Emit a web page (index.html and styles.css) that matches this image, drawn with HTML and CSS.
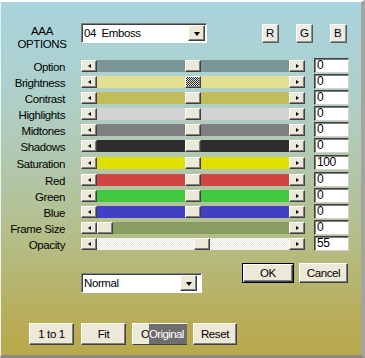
FILE: index.html
```html
<!DOCTYPE html>
<html lang="en">
<head>
    <meta charset="UTF-8">
    <title>AAA Options</title>
    <link rel="stylesheet" href="styles.css">
</head>
<body>
    <div class="window">
        <div class="header">
            <div class="title">AAA<br>OPTIONS</div>
            <div class="combo combo-effect">
                <span class="combo-text">04&nbsp;&nbsp;Emboss</span>
                <span class="drop"></span>
            </div>
            <div class="channels">
                <span class="chan">R</span>
                <span class="chan">G</span>
                <span class="chan">B</span>
            </div>
        </div>

        <div class="sliders">
            <div class="row">
                <span class="label">Option</span>
                <div class="scroll">
                    <span class="arrow arrow-left"></span>
                    <div class="track track-option"><span class="thumb" style="margin-left: 88px"></span></div>
                    <span class="arrow arrow-right"></span>
                </div>
                <span class="edit">0</span>
            </div>
            <div class="row">
                <span class="label">Brightness</span>
                <div class="scroll">
                    <span class="arrow arrow-left"></span>
                    <div class="track track-brightness"><span class="thumb thumb-active" style="margin-left: 88px"></span></div>
                    <span class="arrow arrow-right"></span>
                </div>
                <span class="edit">0</span>
            </div>
            <div class="row">
                <span class="label">Contrast</span>
                <div class="scroll">
                    <span class="arrow arrow-left"></span>
                    <div class="track track-contrast"><span class="thumb" style="margin-left: 88px"></span></div>
                    <span class="arrow arrow-right"></span>
                </div>
                <span class="edit">0</span>
            </div>
            <div class="row">
                <span class="label">Highlights</span>
                <div class="scroll">
                    <span class="arrow arrow-left"></span>
                    <div class="track track-highlights"><span class="thumb" style="margin-left: 88px"></span></div>
                    <span class="arrow arrow-right"></span>
                </div>
                <span class="edit">0</span>
            </div>
            <div class="row">
                <span class="label">Midtones</span>
                <div class="scroll">
                    <span class="arrow arrow-left"></span>
                    <div class="track track-midtones"><span class="thumb" style="margin-left: 88px"></span></div>
                    <span class="arrow arrow-right"></span>
                </div>
                <span class="edit">0</span>
            </div>
            <div class="row">
                <span class="label">Shadows</span>
                <div class="scroll">
                    <span class="arrow arrow-left"></span>
                    <div class="track track-shadows"><span class="thumb" style="margin-left: 88px"></span></div>
                    <span class="arrow arrow-right"></span>
                </div>
                <span class="edit">0</span>
            </div>
            <div class="row row-shift">
                <span class="label">Saturation</span>
                <div class="scroll">
                    <span class="arrow arrow-left"></span>
                    <div class="track track-saturation"><span class="thumb" style="margin-left: 88px"></span></div>
                    <span class="arrow arrow-right"></span>
                </div>
                <span class="edit">100</span>
            </div>
            <div class="row row-shift">
                <span class="label">Red</span>
                <div class="scroll">
                    <span class="arrow arrow-left"></span>
                    <div class="track track-red"><span class="thumb" style="margin-left: 88px"></span></div>
                    <span class="arrow arrow-right"></span>
                </div>
                <span class="edit">0</span>
            </div>
            <div class="row">
                <span class="label">Green</span>
                <div class="scroll">
                    <span class="arrow arrow-left"></span>
                    <div class="track track-green"><span class="thumb" style="margin-left: 88px"></span></div>
                    <span class="arrow arrow-right"></span>
                </div>
                <span class="edit">0</span>
            </div>
            <div class="row">
                <span class="label">Blue</span>
                <div class="scroll">
                    <span class="arrow arrow-left"></span>
                    <div class="track track-blue"><span class="thumb" style="margin-left: 88px"></span></div>
                    <span class="arrow arrow-right"></span>
                </div>
                <span class="edit">0</span>
            </div>
            <div class="row">
                <span class="label">Frame Size</span>
                <div class="scroll">
                    <span class="arrow arrow-left"></span>
                    <div class="track track-frame"><span class="thumb" style="margin-left: 0px"></span></div>
                    <span class="arrow arrow-right"></span>
                </div>
                <span class="edit">0</span>
            </div>
            <div class="row">
                <span class="label">Opacity</span>
                <div class="scroll">
                    <span class="arrow arrow-left"></span>
                    <div class="track track-opacity"><span class="thumb" style="margin-left: 97px"></span></div>
                    <span class="arrow arrow-right"></span>
                </div>
                <span class="edit">55</span>
            </div>
        </div>

        <div class="lower">
            <div class="combo combo-blend">
                <span class="combo-text">Normal</span>
                <span class="drop"></span>
            </div>
            <div class="dialog-buttons">
                <button class="btn btn-default btn-ok">OK</button>
                <button class="btn btn-cancel">Cancel</button>
            </div>
        </div>

        <div class="tools">
            <button class="btn btn-tool">1 to 1</button>
            <button class="btn btn-tool">Fit</button>
            <div class="btn btn-tool btn-original"><span class="original-o">O</span><span class="original-sel">Original</span></div>
            <button class="btn btn-tool btn-reset">Reset</button>
        </div>
    </div>
</body>
</html>
```

FILE: styles.css
```css
* {
    box-sizing: border-box;
}

body {
    margin: 0;
    font-family: "Liberation Sans", Arial, sans-serif;
    font-size: 11.5px;
    letter-spacing: -0.4px;
    color: #000;
}

.window {
    width: 365px;
    height: 358px;
    border-top: 2px solid #ffffff;
    border-left: 1px solid #e8f4f4;
    border-right: 4px solid #a4a4a0;
    border-bottom: 3px solid #8c8a80;
    background: linear-gradient(180deg, #a9d4dd 0%, #aed0cc 25%, #b1c8ae 45%, #b4bd86 68%, #b8ad58 90%, #b9a94c 100%);
    overflow: hidden;
}

/* header */

.header {
    display: flex;
    align-items: flex-start;
    height: 56px;
    padding-top: 21px;
}

.title {
    width: 80px;
    padding-left: 2px;
    margin-top: 2px;
    text-align: center;
    line-height: 13px;
}

.combo {
    display: flex;
    align-items: center;
    height: 20px;
    background: #ffffff;
    border: 1px solid;
    border-color: #808080 #ffffff #ffffff #808080;
    box-shadow: inset 1px 1px #404040;
}

.combo-effect {
    width: 126px;
}

.combo-text {
    flex: 1;
    padding-left: 2px;
    white-space: nowrap;
    line-height: 16px;
}

.drop {
    width: 17px;
    height: 16px;
    margin-right: 1px;
    background: #ece9d8;
    border: 1px solid;
    border-color: #ffffff #404040 #404040 #ffffff;
    box-shadow: inset -1px -1px #808080;
    display: flex;
    align-items: center;
    justify-content: center;
}

.drop::before {
    content: "";
    border-left: 3.5px solid transparent;
    border-right: 3.5px solid transparent;
    border-top: 4px solid #000;
    margin-top: 1px;
}

.channels {
    display: flex;
    gap: 17px;
    margin-left: 55px;
    margin-top: 1px;
}

.chan {
    width: 17px;
    height: 19px;
    padding-left: 3px;
    line-height: 17px;
    background: repeating-conic-gradient(#f4f4ee 0 25%, #e4e4dc 0 50%) 0 0 / 2px 2px;
    border: 1px solid;
    border-color: #ffffff #5a5a5a #5a5a5a #ffffff;
    box-shadow: inset -1px -1px #909090;
}

/* sliders */

.row {
    display: flex;
    align-items: flex-start;
    height: 16px;
}

.row-shift {
    margin-top: 1px;
}

.label {
    width: 64px;
    padding-top: 1px;
    text-align: right;
    line-height: 16px;
    white-space: nowrap;
}

.scroll {
    display: flex;
    width: 224px;
    height: 12px;
    margin-top: 2px;
    margin-left: 16px;
}

.arrow {
    width: 16px;
    height: 12px;
    background: #ece9d8;
    border: 1px solid;
    border-color: #ffffff #404040 #404040 #ffffff;
    box-shadow: inset -1px -1px #808080;
    display: flex;
    align-items: center;
    justify-content: center;
}

.arrow-left::before {
    content: "";
    border-top: 2.5px solid transparent;
    border-bottom: 2.5px solid transparent;
    border-right: 3px solid #000;
}

.arrow-right::before {
    content: "";
    border-top: 2.5px solid transparent;
    border-bottom: 2.5px solid transparent;
    border-left: 3px solid #000;
}

.track {
    display: flex;
    flex: 1;
    height: 12px;
}

.thumb {
    width: 16px;
    height: 12px;
    background: #ece9d8;
    border: 1px solid;
    border-color: #ffffff #404040 #404040 #ffffff;
    box-shadow: inset -1px -1px #808080;
}

.thumb-active {
    background: repeating-conic-gradient(#222 0 25%, #e8e8e8 0 50%) 0 0 / 2px 2px;
}

.track-option { background: #7b9696; }
.track-brightness { background: #e2de92; }
.track-contrast { background: #c2bd5a; }
.track-highlights { background: #d3d3d3; }
.track-midtones { background: #7f7f7f; }
.track-shadows { background: #2e2e2e; }
.track-saturation { background: #e0e000; }
.track-red { background: #d04444; }
.track-green { background: #40c940; }
.track-blue { background: #4040c4; }
.track-frame { background: #8a9c62; }
.track-opacity {
    background: repeating-conic-gradient(#ffffff 0 25%, #e6e6dc 0 50%) 0 0 / 2px 2px;
}

.edit {
    width: 35px;
    height: 15px;
    margin-left: 9px;
    padding-left: 2px;
    line-height: 13px;
    font-size: 12px;
    background: #ffffff;
    border: 1px solid;
    border-color: #404040 #d4d0c8 #d4d0c8 #404040;
    box-shadow: inset 1px 1px #808080;
}

/* lower area */

.lower {
    display: flex;
    align-items: flex-start;
    padding-left: 80px;
    padding-right: 13px;
}

.combo-blend {
    width: 121px;
    margin-top: 21px;
}

.combo-blend .drop {
    margin-right: 4px;
}

.dialog-buttons {
    display: flex;
    gap: 5px;
    margin-left: auto;
    margin-top: 11px;
}

.btn {
    height: 20px;
    padding: 0;
    font-family: inherit;
    font-size: 11.5px;
    letter-spacing: -0.4px;
    color: #000;
    background: #ece9d8;
    border: 1px solid;
    border-color: #ffffff #404040 #404040 #ffffff;
    box-shadow: inset -1px -1px #808080;
}

.btn-default {
    border: 1px solid #000;
    box-shadow: inset 1px 1px #ffffff, inset -1px -1px #404040, inset -2px -2px #808080;
}

.btn-ok {
    width: 52px;
}

.btn-cancel {
    width: 49px;
}

.tools {
    display: flex;
    gap: 6px;
    padding-left: 28px;
    margin-top: 30px;
}

.btn-tool {
    width: 45px;
    height: 22px;
    flex: none;
}

.btn-tool:nth-child(2) {
    margin-left: 1px;
}

.btn-original {
    display: flex;
    align-items: stretch;
    width: 55px;
    line-height: 20px;
    border-right: none;
    box-shadow: none;
}

.original-o {
    flex: none;
    width: 16px;
    padding-left: 8px;
    white-space: nowrap;
}

.original-sel {
    flex: none;
    width: 38px;
    color: #ffffff;
    background: #6e6e6e;
    letter-spacing: -0.6px;
    white-space: nowrap;
}

.btn-reset {
    width: 44px;
}
```
